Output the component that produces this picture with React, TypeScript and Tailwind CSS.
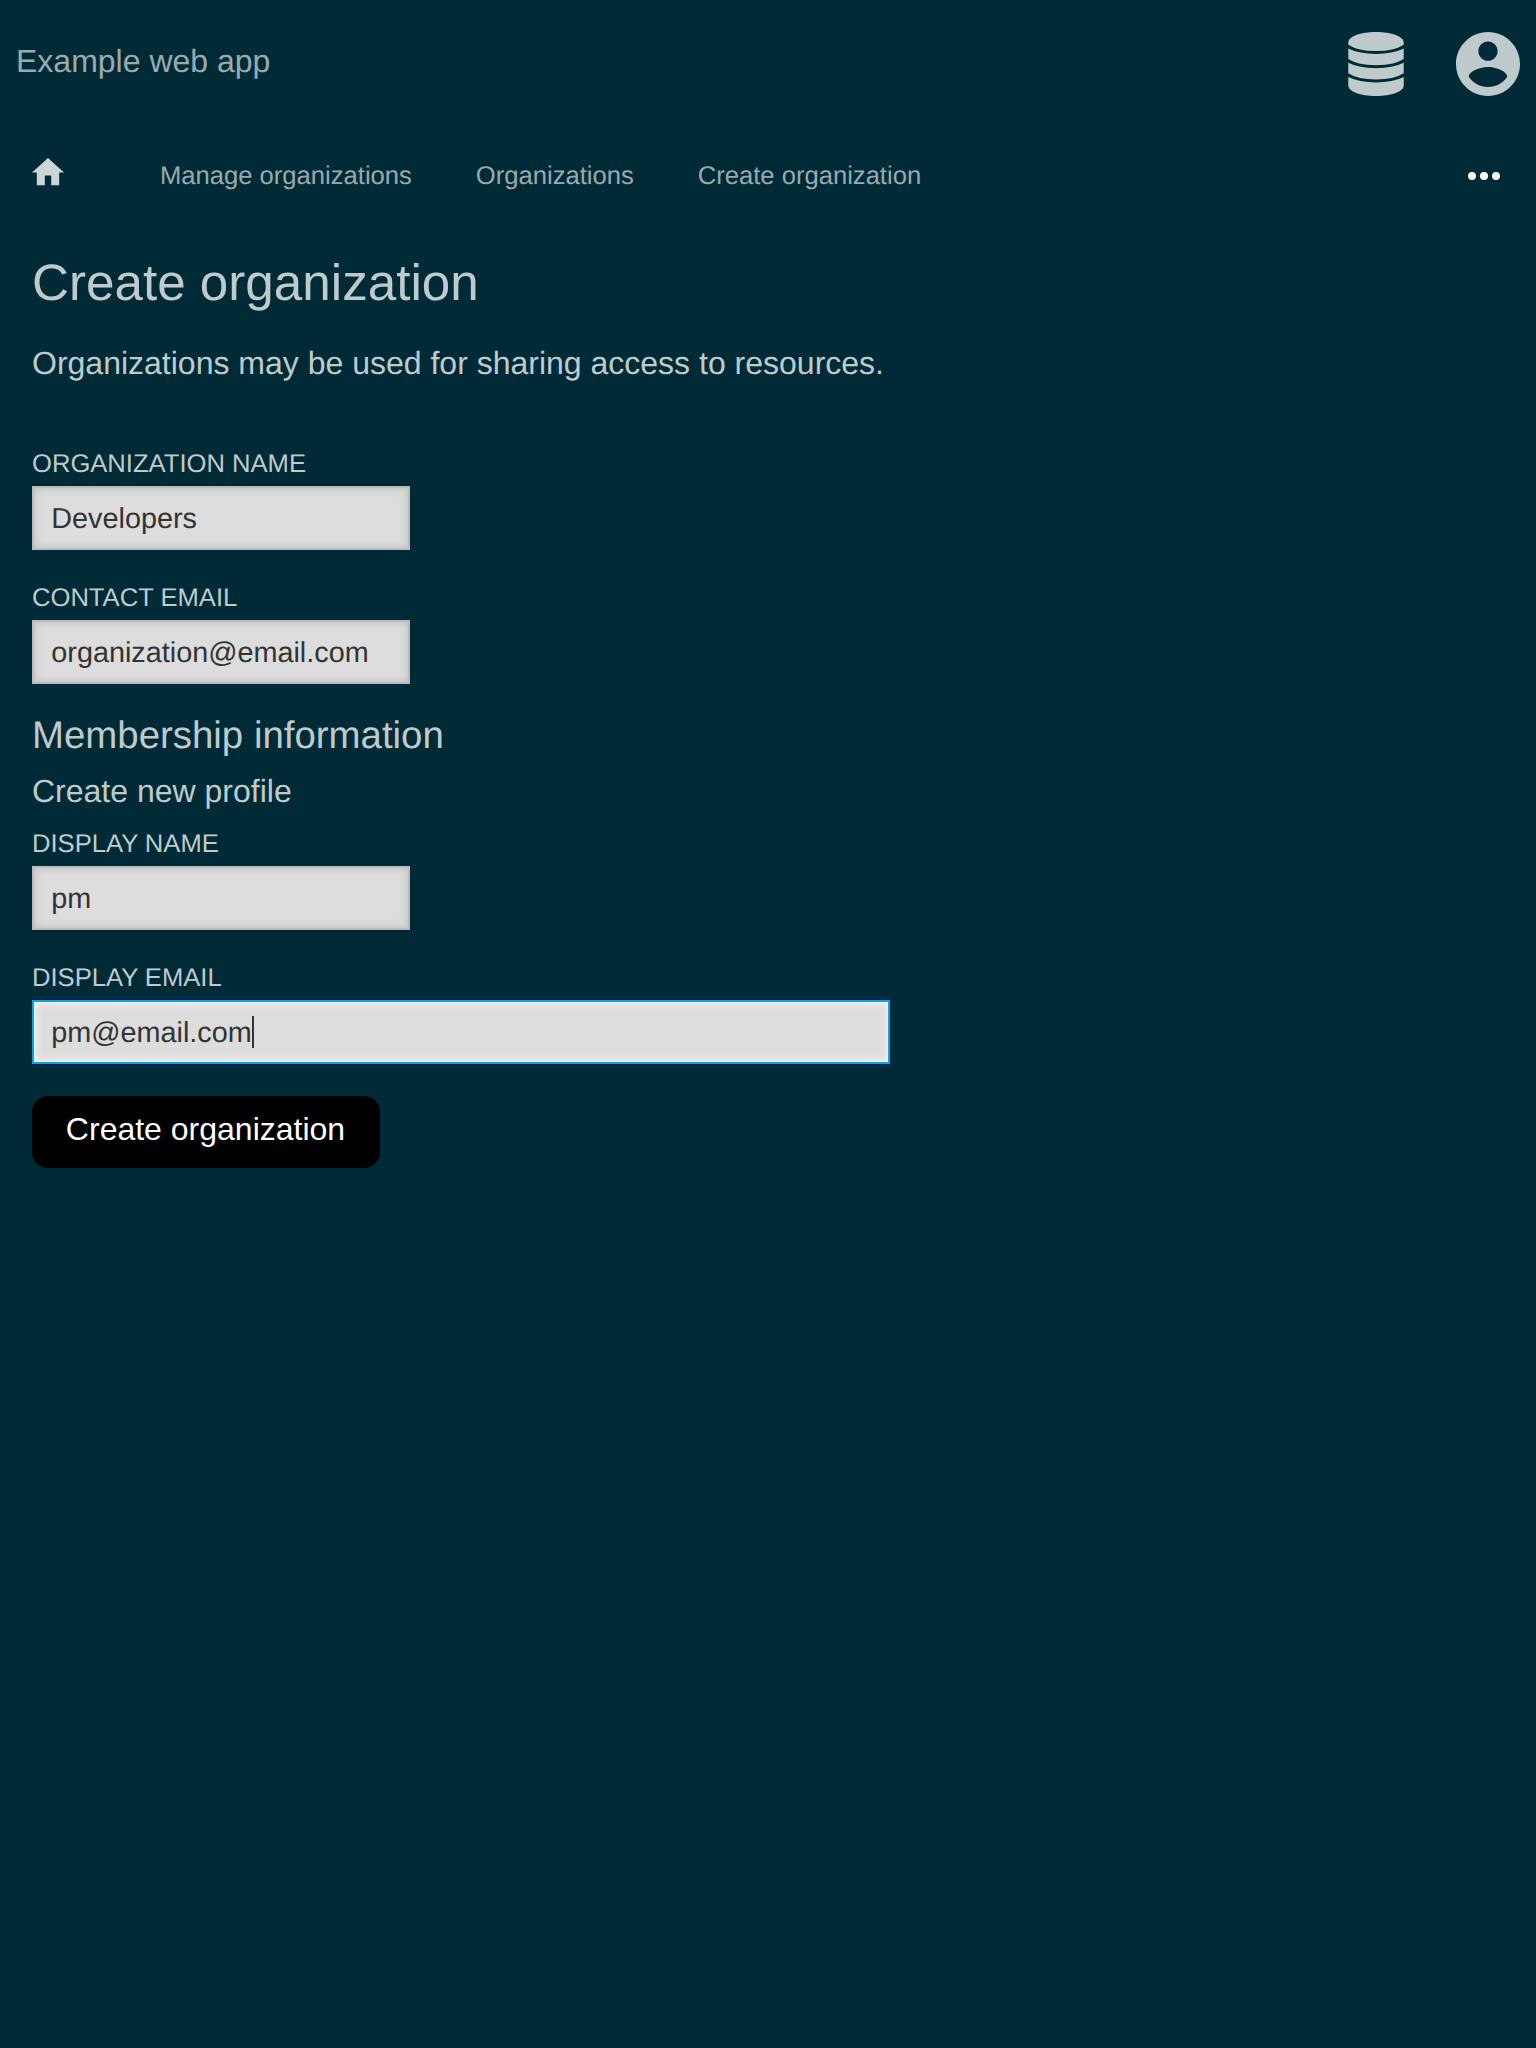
import type { ReactNode } from 'react';

function DatabaseIcon() {
  return (
    <svg viewBox="0 0 56 64" className="h-16 w-14 fill-[#bfcacd]">
      <path d="M.3 10.500C.3 4.600 12.500 0 28 0S55.700 4.600 55.700 10.500V12.700Q46 19 28 19Q10 19 .3 12.700z" />
      <path d="M.3 16.500Q11 21.900 28 21.900Q45 21.900 55.700 16.500V27Q46 33.200 28 33.200Q10 33.200 .3 27z" />
      <path d="M.3 30.800Q11 36.200 28 36.200Q45 36.200 55.700 30.800V41.300Q46 47.500 28 47.500Q10 47.500 .3 41.300z" />
      <path d="M.3 45.100Q11 50.500 28 50.500Q45 50.500 55.700 45.100V53.500C55.700 59.400 43.500 64 28 64S.3 59.400 .3 53.500z" />
    </svg>
  );
}

function AccountIcon() {
  return (
    <svg viewBox="2 2 20 20" className="size-16 fill-[#bfcacd]">
      <path d="M12 2C6.48 2 2 6.48 2 12s4.48 10 10 10 10-4.480 10-10S17.520 2 12 2zm0 3c1.660 0 3 1.340 3 3s-1.340 3-3 3-3-1.340-3-3 1.340-3 3-3zm0 14.200c-2.500 0-4.710-1.280-6-3.220.030-1.990 4-3.080 6-3.080 1.990 0 5.970 1.090 6 3.080-1.290 1.940-3.500 3.220-6 3.220z" />
    </svg>
  );
}

function HomeIcon() {
  return (
    <svg viewBox="2 3 20 17" className="h-[27.2px] w-8 fill-[#ccd5d7]">
      <path d="M10 20v-6h4v6h5v-8h3L12 3 2 12h3v8z" />
    </svg>
  );
}

function Field({ label, focused, children }: { label: string; focused?: boolean; children: ReactNode }) {
  return (
    <div>
      <div className="h-[38px] pt-px text-[25.6px] leading-[30px] uppercase">{label}</div>
      <div
        className={
          focused
            ? 'flex h-16 w-[858px] items-center border-2 border-[#109fee] bg-[#ddd] pl-[17.3px] text-[28.8px] leading-8 text-[#333] shadow-[inset_0_0_8px_#fff]'
            : 'flex h-16 w-[378px] items-center border-2 border-[#bbb] bg-[#ddd] pl-[17.3px] text-[28.8px] leading-8 text-[#333] shadow-[inset_0_0_8px_#bbb]'
        }
      >
        <span className="pt-0.5">{children}</span>
        {focused && <span className="h-8 w-0.5 bg-[#333]" />}
      </div>
    </div>
  );
}

export default function App() {
  return (
    <div className="min-h-[2048px] w-[1536px] bg-[#002b36] font-['Liberation_Sans',Arial,sans-serif] text-[#bfcacd] [text-rendering:geometricPrecision]">
      <header className="flex h-32 items-center justify-between px-4">
        <div className="mb-1.5 text-[32px] leading-9 text-[#99aaaf]">Example web app</div>
        <div className="flex gap-[52px]">
          <DatabaseIcon />
          <AccountIcon />
        </div>
      </header>

      <nav className="flex h-24 items-center px-8 text-[25.6px] leading-[30px] text-[#99aaaf]">
        <div className="mr-24 mb-2">
          <HomeIcon />
        </div>
        <div className="flex grow gap-16">
          <span>Manage organizations</span>
          <span>Organizations</span>
          <span>Create organization</span>
        </div>
        <div className="mr-1 flex gap-1">
          <span className="size-2 rounded-full bg-white" />
          <span className="size-2 rounded-full bg-white" />
          <span className="size-2 rounded-full bg-white" />
        </div>
      </nav>

      <main className="px-8 pt-[30px]">
        <h1 className="text-[51.2px] leading-[58px]">Create organization</h1>
        <p className="mt-[33px] text-[32px] leading-9">Organizations may be used for sharing access to resources.</p>
        <div className="mt-[67px] flex flex-col gap-8">
          <Field label="Organization name">Developers</Field>
          <Field label="Contact email">organization@email.com</Field>
        </div>
        <h2 className="mt-[30px] text-[38.4px] leading-[44px]">Membership information</h2>
        <h3 className="mt-[15px] text-[32px] leading-9">Create new profile</h3>
        <div className="mt-[19px] flex flex-col gap-8">
          <Field label="Display name">pm</Field>
          <Field label="Display email" focused>pm@email.com</Field>
        </div>
        <button className="mt-8 h-[72px] w-[348px] rounded-2xl bg-black pr-px pb-1.5 text-[32px] leading-9 text-white">
          Create organization
        </button>
      </main>
    </div>
  );
}
